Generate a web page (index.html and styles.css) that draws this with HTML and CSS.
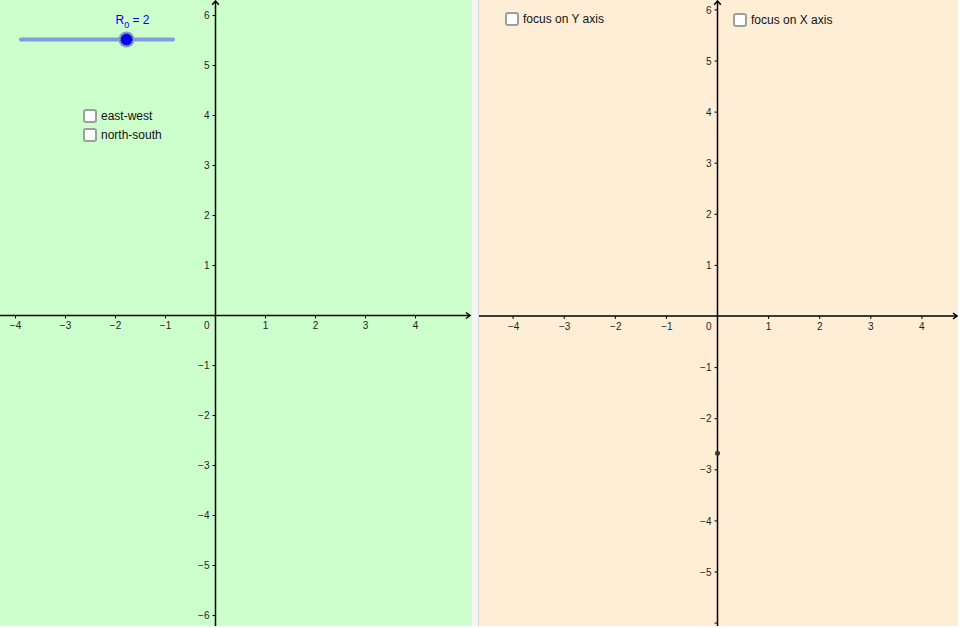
FILE: index.html
```html
<!DOCTYPE html>
<html>
<head>
<meta charset="utf-8">
<title>Graphs</title>
<link rel="stylesheet" href="styles.css">
</head>
<body>
<div class="app">
  <div class="panel left">
    <svg class="plot" width="472" height="626" viewBox="0 0 472 626">
      <g class="axis">
        <line x1="0" y1="315.5" x2="470" y2="315.5"/>
        <polyline points="466,312.5 470,315.5 466,318.5"/>
        <line x1="215.5" y1="1" x2="215.5" y2="626"/>
        <polyline points="212.2,4.7 215.5,1 218.8,4.7"/>
        <path d="M15.5 315.5v3M65.5 315.5v3M115.5 315.5v3M165.5 315.5v3M265.5 315.5v3M315.5 315.5v3M365.5 315.5v3M415.5 315.5v3"/>
        <path d="M212.5 15.5h3M212.5 65.5h3M212.5 115.5h3M212.5 165.5h3M212.5 215.5h3M212.5 265.5h3M212.5 365.5h3M212.5 415.5h3M212.5 465.5h3M212.5 515.5h3M212.5 565.5h3M212.5 615.5h3"/>
      </g>
      <g class="tick xl">
        <text x="15.5" y="329">−4</text>
        <text x="65.5" y="329">−3</text>
        <text x="115.5" y="329">−2</text>
        <text x="165.5" y="329">−1</text>
        <text x="265.5" y="329">1</text>
        <text x="315.5" y="329">2</text>
        <text x="365.5" y="329">3</text>
        <text x="415.5" y="329">4</text>
      </g>
      <g class="tick yl">
        <text x="209.5" y="329">0</text>
        <text x="209.5" y="19.2">6</text>
        <text x="209.5" y="69.2">5</text>
        <text x="209.5" y="119.2">4</text>
        <text x="209.5" y="169.2">3</text>
        <text x="209.5" y="219.2">2</text>
        <text x="209.5" y="269.2">1</text>
        <text x="209.5" y="369.2">−1</text>
        <text x="209.5" y="419.2">−2</text>
        <text x="209.5" y="469.2">−3</text>
        <text x="209.5" y="519.2">−4</text>
        <text x="209.5" y="569.2">−5</text>
        <text x="209.5" y="619.2">−6</text>
      </g>
      <g class="slider">
        <line class="track" x1="21" y1="39.5" x2="173" y2="39.5"/>
        <circle class="halo" cx="126.5" cy="39.5" r="8"/>
        <circle class="knob" cx="126.5" cy="39.5" r="5.5"/>
        <text class="slabel" x="115.5" y="24">R<tspan class="sub" dy="3.5">0</tspan><tspan dy="-3.5"> = 2</tspan></text>
      </g>
    </svg>
    <div class="cb-group left-cbs">
      <label class="cb"><span class="box"></span><span class="cb-text">east-west</span></label>
      <label class="cb"><span class="box"></span><span class="cb-text">north-south</span></label>
    </div>
  </div>
  <div class="divider"></div>
  <div class="panel right">
    <svg class="plot" width="479" height="626" viewBox="0 0 479 626">
      <g class="axis">
        <line x1="0" y1="316" x2="478" y2="316"/>
        <polyline points="474,313 478,316 474,319"/>
        <line x1="238.5" y1="1" x2="238.5" y2="626"/>
        <polyline points="235.2,4.7 238.5,1 241.8,4.7"/>
        <path d="M34.1 316v3M85.2 316v3M136.3 316v3M187.4 316v3M289.6 316v3M340.7 316v3M391.8 316v3M442.9 316v3"/>
        <path d="M235.5 9.9h3M235.5 61h3M235.5 112.1h3M235.5 163.2h3M235.5 214.3h3M235.5 265.4h3M235.5 367.6h3M235.5 418.7h3M235.5 469.8h3M235.5 520.9h3M235.5 572h3M235.5 623.1h3"/>
      </g>
      <g class="tick xl">
        <text x="34.6" y="330">−4</text>
        <text x="85.7" y="330">−3</text>
        <text x="136.8" y="330">−2</text>
        <text x="187.9" y="330">−1</text>
        <text x="289.6" y="330">1</text>
        <text x="340.7" y="330">2</text>
        <text x="391.8" y="330">3</text>
        <text x="442.9" y="330">4</text>
      </g>
      <g class="tick yl">
        <text x="232.5" y="330">0</text>
        <text x="232.5" y="13.5">6</text>
        <text x="232.5" y="64.6">5</text>
        <text x="232.5" y="115.7">4</text>
        <text x="232.5" y="166.8">3</text>
        <text x="232.5" y="217.9">2</text>
        <text x="232.5" y="269">1</text>
        <text x="232.5" y="371.2">−1</text>
        <text x="232.5" y="422.3">−2</text>
        <text x="232.5" y="473.4">−3</text>
        <text x="232.5" y="524.5">−4</text>
        <text x="232.5" y="575.6">−5</text>
      </g>
      <circle class="pt" cx="238.5" cy="453.3" r="2.5"/>
    </svg>
    <label class="cb focus-y"><span class="box"></span><span class="cb-text">focus on Y axis</span></label>
    <label class="cb focus-x"><span class="box"></span><span class="cb-text">focus on X axis</span></label>
  </div>
</div>
</body>
</html>
```
FILE: styles.css
```css
html, body {
  margin: 0;
  padding: 0;
  background: #ffffff;
}

body {
  font-family: "Liberation Sans", Arial, sans-serif;
}

.app {
  display: flex;
  width: 958px;
  height: 626px;
}

.panel {
  position: relative;
  height: 626px;
  overflow: hidden;
}

.left {
  width: 472px;
  background: #ccffcc;
}

.divider {
  width: 6px;
  background: #f5f5f5;
  border-right: 1px solid #d6d6d6;
}

.right {
  width: 479px;
  background: #ffeed6;
}

.plot {
  display: block;
}

.axis line,
.axis polyline,
.axis path {
  stroke: #000;
  stroke-width: 1.5;
  fill: none;
}

.axis path {
  stroke-width: 1;
}

.tick {
  font-family: "Liberation Sans", Arial, sans-serif;
  font-size: 10px;
  fill: #222;
}

.xl text {
  text-anchor: middle;
}

.yl text {
  text-anchor: end;
}

.track {
  stroke: #7f9be2;
  stroke-width: 4;
  stroke-linecap: round;
}

.halo {
  fill: #7d97e4;
}

.knob {
  fill: #0000ff;
  stroke: #000033;
  stroke-width: 1;
  stroke-dasharray: 1.5 1;
}

.slabel {
  font-family: "Liberation Sans", Arial, sans-serif;
  font-size: 12px;
  fill: #0000ff;
}

.slabel .sub {
  font-size: 9px;
}

.pt {
  fill: #333;
}

.cb-group {
  position: absolute;
  display: flex;
  flex-direction: column;
  gap: 5px;
}

.left-cbs {
  left: 83px;
  top: 109px;
}

.cb {
  display: flex;
  align-items: center;
  gap: 4px;
  height: 14px;
  font-size: 12px;
  line-height: 14px;
  color: #111;
  white-space: nowrap;
}

.box {
  box-sizing: border-box;
  width: 14px;
  height: 14px;
  background: #fff;
  border: 2px solid rgba(40, 40, 40, 0.45);
  border-radius: 3px;
}

.focus-y {
  position: absolute;
  left: 26px;
  top: 12px;
}

.focus-x {
  position: absolute;
  left: 254px;
  top: 13px;
}
```
